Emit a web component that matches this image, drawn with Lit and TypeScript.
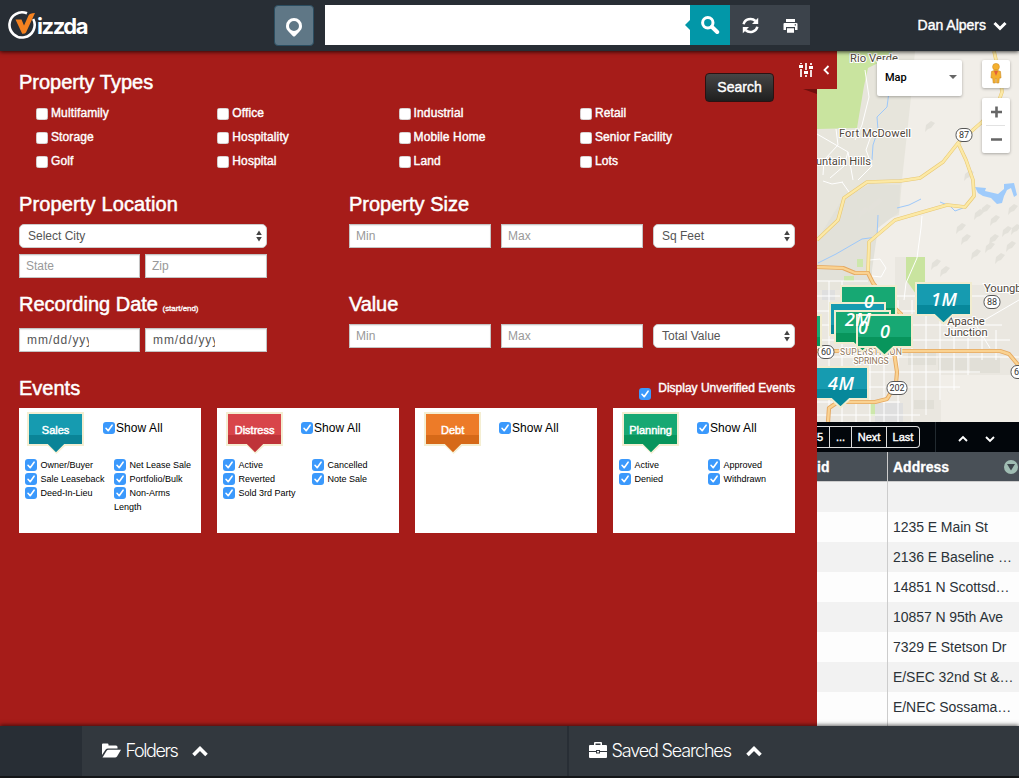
import { LitElement, html, css, svg } from "lit";
import { customElement, property } from "lit/decorators.js";

const check = svg`<path d="M3 6.3 L5.2 8.7 L9.1 3.2" fill="none" stroke="#fff" stroke-width="1.6" stroke-linecap="round" stroke-linejoin="round"/>`;

@customElement("check-box")
class CheckBox extends LitElement {
  @property({ type: Boolean }) checked = false;
  static styles = css`
    :host { display: inline-block; width: 12px; height: 12px; flex: none; }
    .box { display: block; width: 12px; height: 12px; border-radius: 3px; background: #fff; box-shadow: inset 0 0 0 0.6px #b9a9a9; box-sizing: border-box; }
    .on { background: #3b99fc; box-shadow: none; }
  `;
  render() {
    return this.checked
      ? html`<svg class="box on" viewBox="0 0 12 12">${check}</svg>`
      : html`<span class="box"></span>`;
  }
}

@customElement("event-card")
class EventCard extends LitElement {
  @property() name = "";
  @property() tone = "";
  @property() shade = "";
  @property({ attribute: false }) columns: string[][] = [];
  static styles = css`
    :host { display: block; width: 182px; height: 125px; background: #fff; color: #000; }
    .top { display: flex; height: 50px; }
    .tag { display: block; width: 58px; height: 43px; margin: 4px 0 0 8px; flex: none; }
    .shift { margin-left: 9px; margin-right: -1px; }
    .tagtext { font: 11px "Liberation Sans", Arial, sans-serif; fill: #fff; stroke: #fff; stroke-width: 0.45px; text-anchor: middle; }
    .all { display: flex; align-items: center; height: 14px; margin: 13px 0 0 18px; font-size: 12px; letter-spacing: .08px; gap: 1px; }
    .cols { display: grid; grid-template-columns: 89px 82px; padding-left: 6px; font-size: 9px; line-height: 14px; }
    .opt { min-height: 14px; }
    .opt check-box { position: relative; top: -3px; vertical-align: -3px; margin: -2px 3.500px -3px 0; }
  `;
  render() {
    return html`
      <div class="top">
        <svg class="tag ${this.name === "Sales" ? "" : "shift"}" viewBox="0 0 58 43">
          <path d="M0 0H57V34H38L29.500 42L21 34H0Z" fill="#f4eed2"/>
          <path d="M2 2H55V32H37L29 40L21 32H2Z" fill=${this.tone}/>
          <path d="M2 23H55V32H37L29 40L21 32H2Z" fill=${this.shade}/>
          <text class="tagtext" x="28.600" y="22">${this.name}</text>
        </svg>
        <div class="all"><check-box checked></check-box><span>Show All</span></div>
      </div>
      <div class="cols">
        ${this.columns.map(c => html`<div>${c.map(o => html`<div class="opt"><check-box checked></check-box>${o}</div>`)}</div>`)}
      </div>`;
  }
}

const pin = (x: number, y: number, a: string, b: string) => svg`
  <path d="M${x - 2} ${y - 2}h57v34h-19l-9.500 9l-9.500 -9h-19z" fill="#f1eccf"/>
  <path d="M${x} ${y}h53v30h-18l-8.500 8l-8.500 -8h-18z" fill=${a}/>
  <path d="M${x} ${y + 21}h53v9h-18l-8.500 8l-8.500 -8h-18z" fill=${b}/>`;

const shield = (x: number, y: number, t: string) => svg`
  <rect x=${x - (t.length > 2 ? 10 : 8)} y=${y - 6.5} width=${t.length > 2 ? 20 : 16} height="13" rx="6" fill="#fff" stroke="#555" stroke-width="1"/>
  <text class="num" x=${x} y=${y + 3.2}>${t}</text>`;

@customElement("area-map")
class AreaMap extends LitElement {
  static styles = css`
    :host { display: block; position: relative; width: 202px; height: 371px; overflow: hidden; }
    .canvas { display: block; width: 202px; height: 371px; }
    text { font-family: Roboto, sans-serif; }
    .place { font-size: 11.2px; fill: #51483c; stroke: #fff; stroke-width: 2.2px; paint-order: stroke; }
    .mid { text-anchor: middle; }
    .hood { font-size: 8.6px; fill: #8f7659; stroke: #fff; stroke-width: 2px; paint-order: stroke; text-anchor: middle; }
    .num { font-size: 9px; fill: #333; text-anchor: middle; }
    .pin { font: italic 600 18px "Open Sans", sans-serif; fill: #fff; text-anchor: middle; }
    .type { position: absolute; left: 60px; top: 9px; width: 85px; height: 36px; box-sizing: border-box; background: #fff; border-radius: 2px; box-shadow: 0 1px 3px rgba(0,0,0,.3); display: flex; align-items: center; justify-content: space-between; padding: 0 5px 2px 8px; font: 500 11px Roboto, sans-serif; color: #000; }
    .tools { position: absolute; left: 165px; top: 9px; display: flex; flex-direction: column; gap: 10px; }
    .tool { display: block; width: 28px; background: #fff; border-radius: 2px; box-shadow: 0 1px 3px rgba(0,0,0,.3); }
  `;
  render() {
    const greys = [[860,211],[869,206],[874,202],[957,227],[975,213],[982,208],[991,219],[1003,230],[1009,208],[986,246],[972,253],[996,257],[1007,245],[941,270],[932,263],[1012,228],[926,125],[965,174],[990,238],[962,238]];
    return html`
      <svg class="canvas" viewBox="817 51 202 371">
        <rect x="817" y="51" width="202" height="371" fill="#f1eee8"/>
        <path d="M817 51H915L911 97L902 180L899 215L878 223L872 260V290H817Z" fill="#e7e5dc"/>
        <path d="M817 290H895V257H925V285H1019V422H817Z" fill="#eae7e0"/>
        <path d="M941 375H1019V422H941Z" fill="#f1eee8"/>
        <path d="M900 185L899 212L878 228L872 270V281L817 280V240L842 200L870 184Z" fill="#e2e1d9"/>
        <path d="M817 51H893L884 60L868 68L864 86L857 128L817 129Z" fill="#c9e49f"/>
        <path d="M906 257H925V294H916L906 280Z" fill="#c9e49f"/>
        <path d="M857 259h6v8h-6zM844 276h10v5h-10zM870 400h5v16h-5z" fill="#cde7ab"/>
        <path d="M875 403h28v19h-28zM822 290h13v10h-13z" fill="#dfdfdf"/>
        <path d="M908 349h28v16h-28zM938 356h31v14h-31zM970 357h30v16h-30zM914 400h20v9h-20z" fill="#e1dfd7"/>
        ${greys.map(([x, y]) => svg`<path d="M${x} ${y}l5-4 4 2-4 5-3 1-3 3z" fill="#e3e1da"/>`)}
        <g fill="none" stroke="#fff" stroke-width="1">
          <path d="M817 281H868M817 296H1000M817 311H960M817 325H1002M817 340H1010M817 357H1019M817 372H980M817 387H960M817 402H900M817 415H920"/>
          <path d="M829 281V422M842 281V422M856 290V422M870 290V422M884 290V422M898 300V422M912 300V422M926 290V415M940 300V400M954 322V390M968 338V375M982 330V360M996 330V360"/>
          <path d="M922 216L921 228L917 258L906 283L904 300M1019 300L976 325L990 348M842 182L849 192M823 181L832 184L843 182"/>
          <path d="M836 129L838 145L824 160L823 175M817 134L836 145L848 152L844 166L830 178M848 152L853 180M865 70L869 97L862 125L855 140M870 260L880 259L886 268L881 277L872 276"/>
          <path d="M873 130L866 150L872 166L858 180"/>
        </g>
        <g fill="none" stroke="#9dc8fa" stroke-width="1">
          <path d="M890 52L888 60M890 84L887 107L877 117L878 130L873 145L872 160M818 263L836 254L862 239L877 237L878 215M897 208L909 205L921 199M940 202L950 206L955 211L963 208"/>
        </g>
        <path d="M975 187L986 188L985 191L998 194L1004 189L1004 184L1014 183L1017 195L1014 197L1011 188L1007 190L1004 196L1002 203L997 204L991 198L983 196L978 193Z" fill="#9fcbfb"/>
        <g fill="none" stroke-linejoin="round">
          <g stroke="#e8c873" stroke-width="3.6">
            <path d="M994 51L996 60L1000 75L1002 92L997 106L982 122L958 143L943 162L920 178L900 181L867 182L844 198L838 220L817 240"/>
            <path d="M958 143L966 160L973 180L974 196L965 207L947 205L895 220L869 242L868 273"/>
          </g>
          <g stroke="#fce9a6" stroke-width="2.4">
            <path d="M994 51L996 60L1000 75L1002 92L997 106L982 122L958 143L943 162L920 178L900 181L867 182L844 198L838 220L817 240"/>
            <path d="M958 143L966 160L973 180L974 196L965 207L947 205L895 220L869 242L868 273"/>
          </g>
          <g stroke="#e5a860" stroke-width="4.200">
            <path d="M817 267L843 268L855 273L868 273L873 283L888 302L901 314L902 335L894 352L897 372L896 384L887 399L875 402L838 402L829 408L828 422"/>
            <path d="M817 351H1000L1009 354L1019 366"/>
          </g>
          <g stroke="#fad291" stroke-width="2.400">
            <path d="M817 267L843 268L855 273L868 273L873 283L888 302L901 314L902 335L894 352L897 372L896 384L887 399L875 402L838 402L829 408L828 422"/>
            <path d="M817 351H1000L1009 354L1019 366"/>
          </g>
        </g>
        <text class="place" x="850" y="62" textLength="48">Rio Verde</text>
        <text class="place" x="839" y="137" textLength="72">Fort McDowell</text>
        <text class="place" x="816" y="165" textLength="55">untain Hills</text>
        <text class="place" x="984" y="292">Youngb</text>
        <text class="place mid" x="966" y="325">Apache</text>
        <text class="place mid" x="966" y="336">Junction</text>
        <text class="hood" x="871" y="355" textLength="62">SUPERSTITION</text>
        <text class="hood" x="871" y="364">SPRINGS</text>
        ${shield(964, 135, "87")}${shield(992, 302, "88")}${shield(897, 388, "202")}${shield(826, 352, "60")}${shield(1019, 372, "60")}
        ${pin(767, 316, "#17a873", "#08955c")}
        ${pin(842, 287, "#17a873", "#08955c")}
        ${pin(831, 304, "#169bb0", "#07889b")}
        ${pin(836, 312, "#17a873", "#08955c")}
        ${pin(858, 316, "#17a873", "#08955c")}
        ${pin(917, 284, "#169bb0", "#07889b")}
        ${pin(814, 368, "#169bb0", "#07889b")}
        <text class="pin" x="869" y="308">0</text>
        <text class="pin" x="858" y="326" textLength="26">2M</text>
        <text class="pin" x="863" y="334">0</text>
        <text class="pin" x="885" y="338">0</text>
        <text class="pin" x="944" y="306" textLength="26">1M</text>
        <text class="pin" x="841" y="390" textLength="26">4M</text>
      </svg>
      <div class="type"><span>Map</span><svg width="8" height="4" viewBox="0 0 8 4"><path d="M0 0h8L4 4z" fill="#666"/></svg></div>
      <div class="tools">
        <svg class="tool" viewBox="0 0 28 28" height="28">
          <circle cx="14" cy="6.800" r="3.400" fill="#f5b02e" stroke="#d08f24" stroke-width=".6"/>
          <path d="M9.500 11.500Q14 8.500 18.500 11.500L19 18H17.300L16.800 23H14.600V18.500H13.400V23H11.200L10.700 18H9Z" fill="#f5b02e" stroke="#c98a24" stroke-width=".6"/>
          <path d="M12 11L14 16L16 11Z" fill="#e2603a"/>
        </svg>
        <svg class="tool" viewBox="0 0 28 55" height="55">
          <path d="M9 14H20M14.500 8.500V19.500M9 41.500H20" stroke="#666" stroke-width="2.600"/>
          <path d="M4 27.500H23" stroke="#e2e2e2"/>
        </svg>
      </div>`;
  }
}

const chevron = (d: string, w: number, h: number, s = 3) =>
  html`<svg width=${w} height=${h} viewBox="0 0 ${w} ${h}"><path d=${d} fill="none" stroke="#fff" stroke-width=${s}/></svg>`;

@customElement("app-root")
class AppRoot extends LitElement {
  static styles = css`
    :host { display: flex; flex-direction: column; width: 1019px; height: 778px; overflow: hidden; font-family: "Liberation Sans", Arial, sans-serif; color: #fff; background: #17191b; }
    svg { display: block; flex: none; }
    .header { height: 51px; flex: none; background: #282e35; display: flex; align-items: flex-start; padding: 5px 12px 0 8px; box-sizing: border-box; position: relative; z-index: 2; box-shadow: 0 1px 4px 0 rgba(0,0,0,.75); }
    .logo { display: flex; width: 267px; height: 40px; }
    .word { font: 700 22px/28px Inter, sans-serif; letter-spacing: -1.45px; margin: 7px 0 0 -1px; }
    .locate { width: 40px; height: 41px; margin: 0 0 0 -1px; box-sizing: border-box; border: 1px solid #2b4d60; border-radius: 4px; background: #5f7786; display: flex; align-items: center; justify-content: center; padding-top: 3px; }
    .query { width: 365px; height: 40px; margin-left: 11px; background: #fff; display: flex; align-items: center; justify-content: flex-end; }
    .act { width: 40px; height: 40px; background: #3c434b; display: flex; align-items: center; justify-content: center; }
    .go { background: #0297a8; }
    .user { margin-left: auto; height: 40px; display: flex; align-items: center; gap: 7px; font-size: 14px; -webkit-text-stroke: .4px #fff; }
    .body { display: flex; height: 675px; flex: none; }
    .panel { width: 817px; box-sizing: border-box; padding: 19px 22px 0 19px; background: #a61c19; position: relative; z-index: 1; }
    .tab { position: absolute; left: 797px; top: 0; width: 40px; height: 38px; background: #a61c19; display: flex; align-items: center; gap: 10px; padding-left: 2px; box-sizing: border-box; }
    .fold { position: absolute; left: 803px; top: 38px; }
    h2 { margin: 0; height: 24px; font-size: 20px; line-height: 24px; font-weight: 400; -webkit-text-stroke: .5px #fff; white-space: nowrap; }
    .wide { letter-spacing: .14px; }
    .tight { letter-spacing: -.1px; }
    .row { display: flex; justify-content: space-between; align-items: flex-start; height: 24px; }
    .search { width: 69px; height: 29px; margin: 3px 21px 0 0; box-sizing: border-box; border-radius: 4px; border: 1px solid #2b1212; background: linear-gradient(#454545, #1f1f1f); font-size: 14px; line-height: 27px; text-align: center; -webkit-text-stroke: .4px #fff; }
    .types { display: grid; grid-template-columns: repeat(4, 181.300px); grid-auto-rows: 24px; margin: 7px 0 0 17px; }
    .type { display: flex; align-items: center; gap: 3px; font-size: 12px; letter-spacing: .12px; -webkit-text-stroke: .4px #fff; }
    .type check-box { margin-top: 1px; }
    .pair { display: grid; grid-template-columns: 248px 446px; column-gap: 82px; margin-top: 19px; }
    .second { margin-top: 14px; }
    .fields { display: grid; grid-template-columns: 142px 142px 142px; gap: 10px; margin-top: 8px; }
    .halves { display: grid; grid-template-columns: 121px 122px; gap: 5px; margin-top: 6px; }
    .dates { margin-top: 12px; }
    .field { height: 24px; box-sizing: border-box; border: 1px solid #c4c4c4; background: #fff; color: #999; font-size: 12px; line-height: 22px; padding: 0 6px; box-shadow: inset 0 1px 1px rgba(0,0,0,.08); }
    .date { display: block; color: #555; width: 62px; margin-left: 1px; overflow: hidden; white-space: nowrap; letter-spacing: .9px; }
    .select { height: 24px; box-sizing: border-box; border: 1px solid #ccc; border-radius: 5px; background: #fff; color: #555; font-size: 12px; display: flex; align-items: center; justify-content: space-between; padding: 0 4px 0 8px; }
    .first { margin-top: 8px; }
    .hint { font-size: 8px; line-height: 8px; -webkit-text-stroke: .3px #fff; letter-spacing: -.05px; margin-left: -1px; }
    .events { margin-top: 24px; }
    .unverified { display: flex; gap: 7px; font-size: 12px; line-height: 14px; margin-top: 5px; -webkit-text-stroke: .4px #fff; }
    .unverified check-box { margin-top: 7px; }
    .cards { display: flex; gap: 16px; margin-top: 8px; }
    .side { width: 202px; flex: none; }
    .pagerbar { height: 30px; background: #02060b; display: flex; align-items: center; font-size: 11px; -webkit-text-stroke: .4px #fff; }
    .pager { display: flex; height: 22px; box-sizing: border-box; border: 1px solid #ddd; border-left: 0; border-radius: 0 4px 4px 0; line-height: 20px; text-align: center; }
    .page { border-right: 1px solid #ddd; }
    .page:last-child { border: 0; }
    .p5 { width: 12px; text-indent: -6px; overflow: hidden; }
    .pd { width: 21px; }
    .pn { width: 34px; }
    .pl { width: 32px; }
    .nudge { display: flex; align-items: center; gap: 17px; height: 30px; margin-left: 15px; border-left: 1px solid #222a30; padding: 4px 0 0 22px; box-sizing: border-box; }
    .thead { display: flex; height: 30px; background: #495057; font-size: 14px; font-weight: 700; line-height: 30px; border-bottom: 1px solid #ccc; box-sizing: border-box; -webkit-text-stroke: .3px #fff; }
    .narrow { width: 71px; box-sizing: border-box; border-right: 1px solid #ccc; height: 100%; }
    .addr { padding-left: 5px; flex: 1; height: 30px; display: flex; align-items: center; justify-content: space-between; overflow: hidden; }
    .tr { display: flex; height: 30px; line-height: 30px; background: #fdfdfd; color: #2b3238; font-size: 14px; white-space: nowrap; }
    .tr .addr { letter-spacing: -.06px; }
    .tr:nth-child(odd) { background: #f2f2f2; }
    .tr:last-child { height: 34px; }
    .footer { height: 50px; flex: none; display: flex; background: #32383e; position: relative; z-index: 2; box-shadow: 0 -1px 4px 0 rgba(0,0,0,.6); font: 300 18px/50px Inter, "Liberation Sans", sans-serif; letter-spacing: -1.150px; }
    .corner { width: 82px; background: #282e35; }
    .drawer { display: flex; align-items: center; box-sizing: border-box; padding: 0 0 1px 20px; }
    .folders { width: 487px; border-right: 2px solid #282e35; letter-spacing: -1.400px; }
    .label { margin: 0 15px 0 4.500px; white-space: nowrap; }
  `;
  render() {
    const types = ["Multifamily", "Office", "Industrial", "Retail", "Storage", "Hospitality", "Mobile Home", "Senior Facility", "Golf", "Hospital", "Land", "Lots"];
    const cards = [
      { n: "Sales", a: "#169bb0", b: "#0a8497", c: [["Owner/Buyer", "Sale Leaseback", "Deed-In-Lieu"], ["Net Lease Sale", "Portfolio/Bulk", "Non-Arms Length"]] },
      { n: "Distress", a: "#d8454a", b: "#bf3439", c: [["Active", "Reverted", "Sold 3rd Party"], ["Cancelled", "Note Sale"]] },
      { n: "Debt", a: "#ed7b28", b: "#d66918", c: [] },
      { n: "Planning", a: "#17a873", b: "#08955c", c: [["Active", "Denied"], ["Approved", "Withdrawn"]] },
    ];
    const rows = ["", "1235 E Main St", "2136 E Baseline …", "14851 N Scottsd…", "10857 N 95th Ave", "7329 E Stetson Dr", "E/SEC 32nd St &…", "E/NEC Sossama…"];
    const select = (t: string, cls = "") => html`<div class="select ${cls}"><span>${t}</span><svg width="6" height="12" viewBox="0 0 6 12"><path d="M3 0.500L5.800 5H.2ZM3 11.500L5.800 7H.2Z" fill="#444"/></svg></div>`;
    const up = chevron("M1.500 10L8 3.500L14.500 10", 16, 12, 3.6);
    return html`
      <div class="header">
        <div class="logo">
          <svg width="30" height="40" viewBox="8 5 30 40">
            <path d="M27 13.300A12.600 12.600 0 1 0 33.200 19" fill="none" stroke="#fff" stroke-width="2.600"/>
            <path d="M15.500 19.500H21.500L24 25.500L28.500 15.500Q29.500 13.300 35 13L26 32.500Q25 34 22.200 33.800Z" fill="#f58220"/>
          </svg>
          <span class="word">izzda</span>
        </div>
        <div class="locate"><svg width="16" height="20" viewBox="0 0 16 20"><path fill-rule="evenodd" d="M8 1A8 8 0 0 0 0 9C0 11.500 1 13 2.500 14.500L6.800 19Q8 20 9.200 19L13.500 14.500C15 13 16 11.500 16 9A8 8 0 0 0 8 1ZM8 4A5 5 0 1 1 8 14A5 5 0 1 1 8 4Z" fill="#fff"/></svg></div>
        <div class="query"><svg width="5" height="10" viewBox="0 0 5 10"><path d="M5 0V10L0 5Z" fill="#0297a8"/></svg></div>
        <div class="act go"><svg width="20" height="20" viewBox="0 0 20 20"><circle cx="7.800" cy="7.800" r="5.200" fill="none" stroke="#fff" stroke-width="3"/><path d="M11.800 11.800L17.200 17" stroke="#fff" stroke-width="4" stroke-linecap="round"/></svg></div>
        <div class="act"><svg width="17" height="17" viewBox="0 0 17 17"><path d="M1.600 7.200A7 6.500 0 0 1 13.500 4M15.400 9.800A7 6.500 0 0 1 3.500 13" fill="none" stroke="#fff" stroke-width="2.500"/><path d="M16.200 .8V7H10ZM.8 16.200V10H7Z" fill="#fff"/></svg></div>
        <div class="act"><svg width="15" height="15" viewBox="0 0 15 15"><path fill-rule="evenodd" d="M3 1H12V4H3ZM1.500 5H13.500Q14.500 5 14.500 6V12H12V9H3V12H.5V6Q.5 5 1.500 5ZM11.700 6.300H13V7.500H11.700ZM4 10.200H11V14.800H4Z" fill="#fff"/></svg></div>
        <div class="user"><span>Dan Alpers</span>${chevron("M1.500 3L7 8.500L12.500 3", 14, 11, 3)}</div>
      </div>
      <div class="body">
        <div class="panel">
          <div class="row"><h2>Property Types</h2><div class="search">Search</div></div>
          <div class="types">${types.map(t => html`<div class="type"><check-box></check-box><span>${t}</span></div>`)}</div>
          <div class="pair">
            <div>
              <h2 class="wide">Property Location</h2>
              ${select("Select City", "first")}
              <div class="halves"><div class="field">State</div><div class="field">Zip</div></div>
            </div>
            <div>
              <h2>Property Size</h2>
              <div class="fields"><div class="field">Min</div><div class="field">Max</div>${select("Sq Feet")}</div>
            </div>
          </div>
          <div class="pair second">
            <div>
              <h2>Recording Date <span class="hint">(start/end)</span></h2>
              <div class="halves dates"><div class="field"><span class="date">mm/dd/yyy</span></div><div class="field"><span class="date">mm/dd/yyy</span></div></div>
            </div>
            <div>
              <h2 class="tight">Value</h2>
              <div class="fields"><div class="field">Min</div><div class="field">Max</div>${select("Total Value")}</div>
            </div>
          </div>
          <div class="row events"><h2>Events</h2><div class="unverified"><check-box checked></check-box><span>Display Unverified Events</span></div></div>
          <div class="cards">${cards.map(c => html`<event-card .name=${c.n} .tone=${c.a} .shade=${c.b} .columns=${c.c}></event-card>`)}</div>
          <svg class="fold" width="14" height="5" viewBox="0 0 14 5"><path d="M0 0H14V5Z" fill="#6f0f0d"/></svg>
          <div class="tab">
            <svg width="14" height="14" viewBox="0 0 14 14"><path d="M2 0V14M7 0V14M12 0V14" stroke="#fff" stroke-width="1.700"/><path d="M0 3.500H4M5 9.500H9M10 4.500H14" stroke="#a61c19" stroke-width="5"/><path d="M0 3.500H4M5 9.500H9M10 4.500H14" stroke="#fff" stroke-width="3"/></svg>
            ${chevron("M5.500 1L1.500 5L5.500 9", 7, 10, 1.8)}
          </div>
        </div>
        <div class="side">
          <area-map></area-map>
          <div class="pagerbar">
            <div class="pager"><span class="page p5">5</span><span class="page pd">...</span><span class="page pn">Next</span><span class="page pl">Last</span></div>
            <div class="nudge">${chevron("M1 6L5 2L9 6", 10, 8, 1.9)}${chevron("M1 2L5 6L9 2", 10, 8, 1.9)}</div>
          </div>
          <div class="thead"><div class="narrow">id</div><div class="addr"><span>Address</span><svg width="15" height="14" viewBox="0 0 15 14"><circle cx="7" cy="7" r="7" fill="#a0bdb3"/><path d="M3 4H11L7 10.500Z" fill="#3d464c"/></svg></div></div>
          <div>${rows.map(r => html`<div class="tr"><div class="narrow"></div><div class="addr"><span>${r}</span></div></div>`)}</div>
        </div>
      </div>
      <div class="footer">
        <div class="corner"></div>
        <div class="drawer folders">
          <svg width="19" height="15" viewBox="0 0 19 15"><path d="M0 12V1.500Q0 .5 1 .5H5.500Q6.500 .5 6.500 1.500V2.500H14Q15.500 2.500 15.500 4V5.500H6Q4.500 5.500 3.500 6.800Z" fill="#fff"/><path d="M.5 14.500L4.500 8Q5.300 6.800 6.500 6.800H19L15 13.500Q14.300 14.500 13 14.500Z" fill="#fff"/></svg>
          <span class="label">Folders</span>${up}
        </div>
        <div class="drawer">
          <svg width="18" height="17" viewBox="0 0 18 17"><path fill-rule="evenodd" d="M5 3V1Q5 0 6 0H12Q13 0 13 1V3H17Q18 3 18 4V9H11V8H7V9H0V4Q0 3 1 3ZM6.500 1.500V3H11.500V1.500ZM0 10H7V11.500H11V10H18V15Q18 16 17 16H1Q0 16 0 15ZM8 9H10V10.500H8Z" fill="#fff"/></svg>
          <span class="label">Saved Searches</span>${up}
        </div>
      </div>`;
  }
}
